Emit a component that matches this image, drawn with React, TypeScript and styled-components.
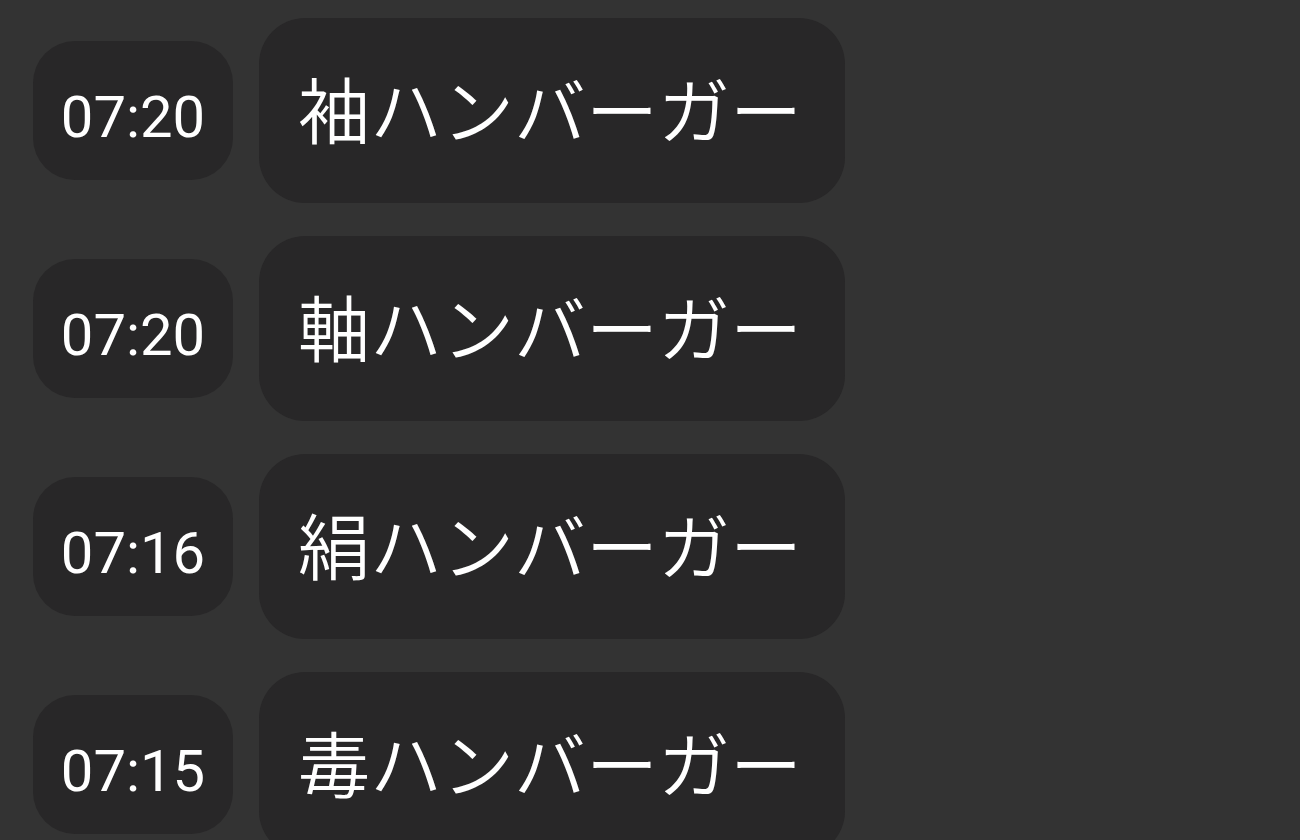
import styled, { createGlobalStyle } from "styled-components";

const messages = [
  { time: "07:20", text: "袖ハンバーガー" },
  { time: "07:20", text: "軸ハンバーガー" },
  { time: "07:16", text: "絹ハンバーガー" },
  { time: "07:15", text: "毒ハンバーガー" },
];

const GlobalStyle = createGlobalStyle`
  html, body {
    margin: 0;
    background: #333333;
    overflow: hidden;
  }
  body {
    font-family: Roboto, "Noto Sans CJK JP", sans-serif;
    color: #ffffff;
  }
`;

const App = () => (
  <>
    <GlobalStyle />
    <StyledList>
      {messages.map((m, i) => (
        <StyledRow key={i}>
          <StyledTime>{m.time}</StyledTime>
          <StyledBubble>{m.text}</StyledBubble>
        </StyledRow>
      ))}
    </StyledList>
  </>
);

export default App;

const StyledList = styled.div`
  display: flex;
  flex-direction: column;
  gap: 33px;
  padding: 18px 0 0 33px;
`;

const StyledRow = styled.div`
  display: flex;
  align-items: center;
  gap: 26px;
`;

const StyledTime = styled.div`
  display: flex;
  align-items: center;
  justify-content: center;
  box-sizing: border-box;
  width: 200px;
  height: 139px;
  padding-top: 12px;
  border-radius: 42px;
  background: #282728;
  font-size: 58px;
`;

const StyledBubble = styled.div`
  display: flex;
  align-items: center;
  box-sizing: border-box;
  width: 586px;
  height: 185px;
  padding: 0 0 8px 39px;
  border-radius: 46px;
  background: #282728;
  font-family: "Noto Sans CJK JP", sans-serif;
  font-size: 72px;
  font-weight: 350;
  white-space: nowrap;
`;
